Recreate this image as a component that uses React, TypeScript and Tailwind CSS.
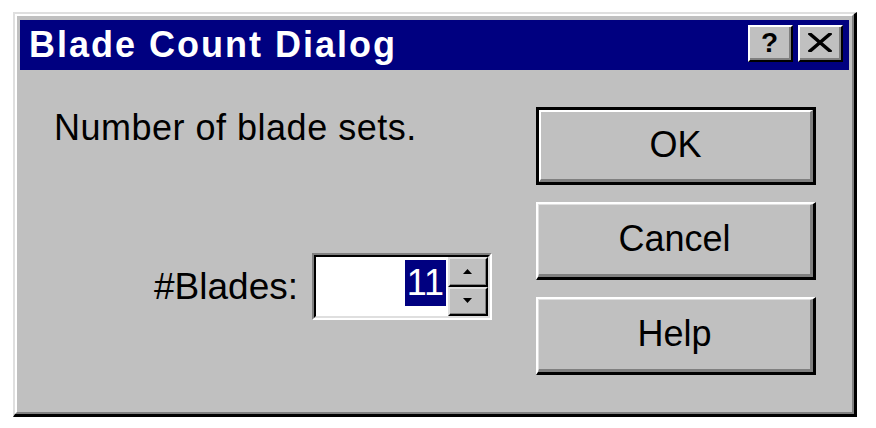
export default function App() {
  return (
    <div className="w-[876px] h-[428px] bg-white pt-[12px] pl-[13px] font-['Liberation_Sans',Arial,sans-serif] text-black">
      {/* window frame */}
      <div className="w-[844px] h-[405px] bg-[#c0c0c0] border-t-2 border-l-2 border-t-[#dfdfdf] border-l-[#dfdfdf] border-r-[3px] border-b-[3px] border-r-black border-b-black">
        <div className="h-full flex flex-col border-t-2 border-l-2 border-t-white border-l-white border-r-2 border-b-2 border-r-[#808080] border-b-[#808080] px-[3px] pt-[4px] pb-[3px]">
          {/* title bar */}
          <div className="h-[50px] shrink-0 bg-[#000080] flex pl-[9px] pr-[6px]">
            <span className="flex-1 self-center text-white font-bold text-[36px] leading-none tracking-[2px]">
              Blade Count Dialog
            </span>
            <TitleButton>
              <span className="font-bold text-[28px] leading-none">?</span>
            </TitleButton>
            <TitleButton className="ml-[5px]">
              <svg width="24" height="19" viewBox="0 0 24 19">
                <path d="M2 1 L22 18 M22 1 L2 18" stroke="#000" strokeWidth="3.5" strokeLinecap="square" />
              </svg>
            </TitleButton>
          </div>

          {/* client area */}
          <div className="flex-1 flex">
            <div className="flex-1 pl-[34px] pt-[40px]">
              <p className="text-[36px] leading-none tracking-[0.5px]">Number of blade sets.</p>
              <div className="mt-[107px] flex items-center">
                <span className="w-[258px] pr-[14px] text-right text-[37px] leading-none">#Blades:</span>
                <SpinBox />
              </div>
            </div>

            <div className="w-[280px] mr-[33px] mt-[37px] flex flex-col gap-[17px]">
              <DefaultButton>OK</DefaultButton>
              <PushButton>Cancel</PushButton>
              <PushButton>Help</PushButton>
            </div>
          </div>
        </div>
      </div>
    </div>
  )
}

function TitleButton({ children, className = '' }: { children: React.ReactNode; className?: string }) {
  return (
    <div className={`mt-[5px] w-[45px] h-[37px] bg-[#c0c0c0] border-t-2 border-l-2 border-t-white border-l-white border-r-2 border-b-2 border-r-black border-b-black ${className}`}>
      <div className="h-full flex items-center justify-center border-r-2 border-b-2 border-r-[#808080] border-b-[#808080]">
        {children}
      </div>
    </div>
  )
}

function DefaultButton({ children }: { children: React.ReactNode }) {
  return (
    <div className="h-[78px] border-[3px] border-black">
      <div className="h-full flex items-center justify-center border-t-2 border-l-2 border-t-white border-l-white border-r-[3px] border-b-[3px] border-r-[#808080] border-b-[#808080] pb-[2px] text-[36px] leading-none">
        {children}
      </div>
    </div>
  )
}

function PushButton({ children }: { children: React.ReactNode }) {
  return (
    <div className="h-[78px] border-t-2 border-l-2 border-t-white border-l-white border-r-[3px] border-b-[3px] border-r-black border-b-black">
      <div className="h-full flex items-center justify-center border-t border-l border-t-[#dfdfdf] border-l-[#dfdfdf] border-r-[3px] border-b-[3px] border-r-[#808080] border-b-[#808080] pb-[2px] text-[36px] leading-none">
        {children}
      </div>
    </div>
  )
}

function SpinBox() {
  return (
    <div className="w-[180px] h-[67px] border-t-2 border-l-2 border-t-[#808080] border-l-[#808080] border-r-2 border-b-2 border-r-white border-b-white">
      <div className="h-full flex bg-white border-t-2 border-l-2 border-t-black border-l-black border-r-2 border-b-2 border-r-[#dfdfdf] border-b-[#dfdfdf]">
        <div className="flex-1 flex justify-end items-start pt-[3px] pr-[2px]">
          <span className="bg-[#000080] text-white text-[36px] leading-[46px] px-[2px]">11</span>
        </div>
        <div className="w-[40px] flex flex-col">
          <SpinButton up />
          <SpinButton />
        </div>
      </div>
    </div>
  )
}

function SpinButton({ up = false }: { up?: boolean }) {
  return (
    <div className="flex-1 bg-[#c0c0c0] border-t-2 border-l-2 border-t-[#dfdfdf] border-l-[#dfdfdf] border-r-2 border-b-2 border-r-black border-b-black">
      <div className="h-full flex items-center justify-center border-r border-b border-r-[#808080] border-b-[#808080]">
        <svg width="9" height="5" viewBox="0 0 9 5">
          <path d={up ? 'M0 5 L4.5 0 L9 5 Z' : 'M0 0 L4.5 5 L9 0 Z'} fill="#000" />
        </svg>
      </div>
    </div>
  )
}
